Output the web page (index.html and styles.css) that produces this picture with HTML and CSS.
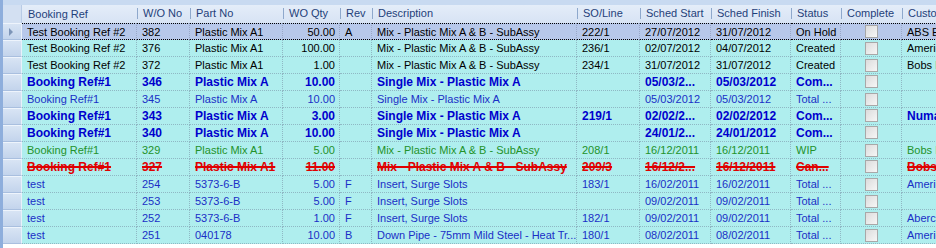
FILE: index.html
```html
<!DOCTYPE html>
<html>
<head>
<meta charset="utf-8">
<link rel="stylesheet" href="styles.css">
</head>
<body>
<div class="grid">
  <div class="topband"></div>
  <table class="dg">
    <colgroup>
      <col class="c-rh"><col class="c-ref"><col class="c-wo"><col class="c-part"><col class="c-qty"><col class="c-rev"><col class="c-desc"><col class="c-so"><col class="c-start"><col class="c-finish"><col class="c-status"><col class="c-complete"><col class="c-cust">
    </colgroup>
    <thead>
      <tr class="hdr">
        <th class="rh"></th>
        <th><span>Booking Ref</span></th>
        <th class="sep"><span>W/O No</span></th>
        <th class="sep"><span>Part No</span></th>
        <th class="sep"><span>WO Qty</span></th>
        <th class="sep"><span>Rev</span></th>
        <th class="sep"><span>Description</span></th>
        <th class="sep"><span>SO/Line</span></th>
        <th class="sep"><span>Sched Start</span></th>
        <th class="sep"><span>Sched Finish</span></th>
        <th class="sep"><span>Status</span></th>
        <th class="sep"><span>Complete</span></th>
        <th class="sep"><span>Customer</span></th>
      </tr>
    </thead>
    <tbody>
      <tr class="black selected">
        <td class="rh"><span class="arrow"></span></td>
        <td>Test Booking Ref #2</td><td>382</td><td>Plastic Mix A1</td><td class="num">50.00</td><td>A</td><td>Mix - Plastic Mix A &amp; B - SubAssy</td><td>222/1</td><td>27/07/2012</td><td>31/07/2012</td><td>On Hold</td><td class="chk"><span class="box"></span></td><td>ABS Engineering</td>
      </tr>
      <tr class="black">
        <td class="rh"></td>
        <td>Test Booking Ref #2</td><td>376</td><td>Plastic Mix A1</td><td class="num">100.00</td><td></td><td>Mix - Plastic Mix A &amp; B - SubAssy</td><td>236/1</td><td>02/07/2012</td><td>04/07/2012</td><td>Created</td><td class="chk"><span class="box"></span></td><td>American Steel</td>
      </tr>
      <tr class="black">
        <td class="rh"></td>
        <td>Test Booking Ref #2</td><td>372</td><td>Plastic Mix A1</td><td class="num">1.00</td><td></td><td>Mix - Plastic Mix A &amp; B - SubAssy</td><td>234/1</td><td>31/07/2012</td><td>31/07/2012</td><td>Created</td><td class="chk"><span class="box"></span></td><td>Bobs Builders</td>
      </tr>
      <tr class="bblue">
        <td class="rh"></td>
        <td>Booking Ref#1</td><td>346</td><td>Plastic Mix A</td><td class="num">10.00</td><td></td><td>Single Mix - Plastic Mix A</td><td></td><td>05/03/2...</td><td>05/03/2012</td><td>Com...</td><td class="chk"><span class="box"></span></td><td></td>
      </tr>
      <tr class="blue">
        <td class="rh"></td>
        <td>Booking Ref#1</td><td>345</td><td>Plastic Mix A</td><td class="num">10.00</td><td></td><td>Single Mix - Plastic Mix A</td><td></td><td>05/03/2012</td><td>05/03/2012</td><td>Total ...</td><td class="chk"><span class="box"></span></td><td></td>
      </tr>
      <tr class="bblue">
        <td class="rh"></td>
        <td>Booking Ref#1</td><td>343</td><td>Plastic Mix A</td><td class="num">3.00</td><td></td><td>Single Mix - Plastic Mix A</td><td>219/1</td><td>02/02/2...</td><td>02/02/2012</td><td>Com...</td><td class="chk"><span class="box"></span></td><td>Numatic</td>
      </tr>
      <tr class="bblue">
        <td class="rh"></td>
        <td>Booking Ref#1</td><td>340</td><td>Plastic Mix A</td><td class="num">10.00</td><td></td><td>Single Mix - Plastic Mix A</td><td></td><td>24/01/2...</td><td>24/01/2012</td><td>Com...</td><td class="chk"><span class="box"></span></td><td></td>
      </tr>
      <tr class="green">
        <td class="rh"></td>
        <td>Booking Ref#1</td><td>329</td><td>Plastic Mix A1</td><td class="num">5.00</td><td></td><td>Mix - Plastic Mix A &amp; B - SubAssy</td><td>208/1</td><td>16/12/2011</td><td>16/12/2011</td><td>WIP</td><td class="chk"><span class="box"></span></td><td>Bobs Builders</td>
      </tr>
      <tr class="red">
        <td class="rh"></td>
        <td><s>Booking Ref#1</s></td><td><s>327</s></td><td><s>Plastic Mix A1</s></td><td class="num"><s>11.00</s></td><td></td><td><s>Mix - Plastic Mix A &amp; B - SubAssy</s></td><td><s>209/3</s></td><td><s>16/12/2...</s></td><td><s>16/12/2011</s></td><td><s>Can...</s></td><td class="chk"><span class="box"></span></td><td><s>Bobs Builders</s></td>
      </tr>
      <tr class="blue">
        <td class="rh"></td>
        <td>test</td><td>254</td><td>5373-6-B</td><td class="num">5.00</td><td>F</td><td>Insert, Surge Slots</td><td>183/1</td><td>16/02/2011</td><td>16/02/2011</td><td>Total ...</td><td class="chk"><span class="box"></span></td><td>American Steel</td>
      </tr>
      <tr class="blue">
        <td class="rh"></td>
        <td>test</td><td>253</td><td>5373-6-B</td><td class="num">5.00</td><td>F</td><td>Insert, Surge Slots</td><td></td><td>09/02/2011</td><td>09/02/2011</td><td>Total ...</td><td class="chk"><span class="box"></span></td><td></td>
      </tr>
      <tr class="blue">
        <td class="rh"></td>
        <td>test</td><td>252</td><td>5373-6-B</td><td class="num">1.00</td><td>F</td><td>Insert, Surge Slots</td><td>182/1</td><td>09/02/2011</td><td>09/02/2011</td><td>Total ...</td><td class="chk"><span class="box"></span></td><td>Abercrombie</td>
      </tr>
      <tr class="blue">
        <td class="rh"></td>
        <td>test</td><td>251</td><td>040178</td><td class="num">10.00</td><td>B</td><td>Down Pipe - 75mm Mild Steel - Heat Tr...</td><td>180/1</td><td>08/02/2011</td><td>08/02/2011</td><td>Total ...</td><td class="chk"><span class="box"></span></td><td>American Steel</td>
      </tr>
    </tbody>
  </table>
</div>
</body>
</html>
```

FILE: styles.css
```css
html, body {
  margin: 0;
  padding: 0;
  background: #ffffff;
  overflow: hidden;
}
.grid {
  width: 936px;
  height: 248px;
  border-left: 3px solid #8eaedc;
  box-sizing: border-box;
  background: #ffffff;
  overflow: hidden;
  font-family: "Liberation Sans", Arial, sans-serif;
  font-size: 11px;
}
.topband {
  height: 5px;
  background: #c8daf1;
}
.dg {
  border-collapse: separate;
  border-spacing: 0;
  table-layout: fixed;
  width: 1000px;
}
.c-rh { width: 19px; }
.c-ref { width: 115px; }
.c-wo { width: 53px; }
.c-part { width: 93px; }
.c-qty { width: 57px; }
.c-rev { width: 32px; }
.c-desc { width: 205px; }
.c-so { width: 63px; }
.c-start { width: 71px; }
.c-finish { width: 80px; }
.c-status { width: 50px; }
.c-complete { width: 61px; }
.c-cust { width: 101px; }

.hdr th {
  height: 18px;
  padding: 0;
  background: linear-gradient(#e4edf9, #d7e3f4);
  color: #1f3f7a;
  font-weight: normal;
  text-align: left;
  white-space: nowrap;
  overflow: hidden;
}
.hdr th span {
  display: block;
  padding-left: 6px;
  line-height: 18px;
}
.hdr th.sep span {
  border-left: 1px solid #8ea8cc;
  line-height: 11px;
  margin: 3px 0 4px 0;
  padding-left: 5px;
}
.hdr th.rh {
  background: #d3e0f2;
  border-right: 1px solid #b8cbe6;
}

tbody td {
  height: 16px;
  padding: 0 4px 0 5px;
  border-right: 1px dotted #8fb8c4;
  border-bottom: 1px dotted #8fb8c4;
  background: #afeeee;
  white-space: nowrap;
  overflow: hidden;
  line-height: 16px;
}
tbody td.num { text-align: right; padding-right: 4px; }
tbody td.rh {
  padding: 0;
  background: linear-gradient(#d8e4f4, #c3d4ec);
  border-right: 1px solid #e8f0fa;
  border-bottom: 1px solid #a9bfdf;
  border-top: 1px solid #eef4fc;
  height: 15px;
  position: relative;
}
tbody td.chk { text-align: center; padding: 0; }
.box {
  display: inline-block;
  width: 11px;
  height: 11px;
  border: 1px solid #a8a8a8;
  background: linear-gradient(135deg, #dcdcdc, #f6f6f6);
  vertical-align: middle;
  margin-top: -2px;
}
.arrow {
  position: absolute;
  left: 6px;
  top: 4px;
  width: 0;
  height: 0;
  border-top: 4px solid transparent;
  border-bottom: 4px solid transparent;
  border-left: 4px solid #7d95b8;
}

tr.selected td:not(.rh) {
  background: #b7c8ea;
  border-top: 1px dotted #000;
  border-bottom: 1px dotted #000;
  border-right: 1px dotted #9aa8c8;
  height: 14px;
  line-height: 14px;
}

tr.black td { color: #000000; }
tr.bblue td { color: #0000cd; font-weight: bold; font-size: 12px; }
tr.blue td { color: #1a2fc6; }
tr.green td { color: #23922a; }
tr.red td { color: #e00000; font-weight: bold; font-size: 12px; }
tr.red s { text-decoration: line-through; text-decoration-thickness: 2px; }
```
